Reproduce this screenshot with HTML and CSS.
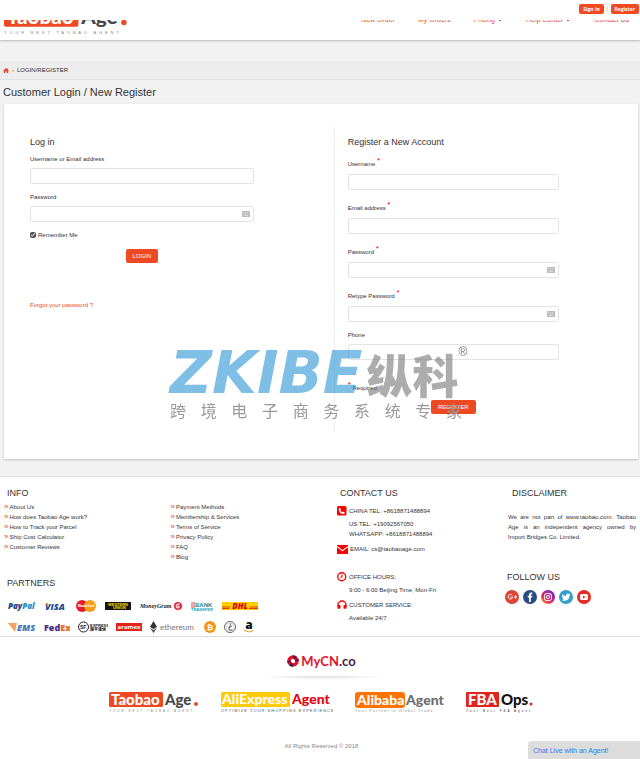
FILE: index.html
```html
<!DOCTYPE html>
<html lang="en">
<head>
  <meta charset="UTF-8" />
  <meta name="viewport" content="width=device-width, initial-scale=1" />
  <title>Customer Login / New Register - Taobao Age</title>
  <link rel="stylesheet" href="styles.css">
</head>
<body>

<!-- Shared drawings -->
<svg class="sprite" aria-hidden="true">
  <symbol id="logo-taobao" viewBox="0 0 90 21">
    <rect x="0" y="0" width="54" height="15" rx="1.5" fill="#ed4a24"/>
    <text x="2" y="13" class="wordmark" fill="#fff">Taobao</text>
    <text x="56" y="13" class="wordmark" fill="#454849">Age</text>
    <circle cx="87" cy="12" r="2" fill="#ed4a24"/>
    <text x="0" y="20" class="tagline tagline-wide" fill="#888">YOUR BEST TAOBAO AGENT</text>
  </symbol>
  <symbol id="icon-keyboard" viewBox="0 0 8 6">
    <rect width="8" height="6" rx="0.5" fill="#bbb"/>
    <path d="M1 1.5h1M3 1.5h1M5 1.5h1M1.5 3h1M3.5 3h1M5.5 3h1M2 4.6h4" stroke="#fff" stroke-width="0.5"/>
  </symbol>
</svg>

<div class="topbar">
  <a class="top-btn" href="#login">Sign in</a>
  <span class="top-sep">|</span>
  <a class="top-btn" href="#register">Register</a>
</div>

<header class="header">
  <a class="header-logo" href="#" aria-label="Taobao Age"><svg width="124" height="29"><use href="#logo-taobao"/></svg></a>
  <nav class="nav">
    <a href="#">New Order</a>
    <a href="#">My Orders</a>
    <a href="#">Pricing <svg width="6" height="4" viewBox="0 0 6 4"><path d="M1 1l2 2 2-2" fill="none" stroke="#ed4a24"/></svg></a>
    <a href="#">Help Center <svg width="6" height="4" viewBox="0 0 6 4"><path d="M1 1l2 2 2-2" fill="none" stroke="#ed4a24"/></svg></a>
    <a href="#">Contact Us</a>
  </nav>
</header>

<div class="breadcrumb">
  <a href="#" aria-label="Home"><svg width="6" height="5" viewBox="0 0 6 5"><path d="M3 0L0 2.7h.8V5h1.6V3.2h1.2V5h1.6V2.7H6L5 1.8V.4h-.8v.7z" fill="#ed4a24"/></svg></a>
  <span class="crumb-sep">›</span>
  <span>LOGIN/REGISTER</span>
</div>

<h1 class="page-title">Customer Login / New Register</h1>

<main class="card">
  <form class="login" id="login">
    <h2>Log in</h2>
    <div class="field">
      <label for="log-user">Username or Email address</label>
      <input type="text" id="log-user">
    </div>
    <div class="field">
      <label for="log-pass">Password</label>
      <div class="input-wrap">
        <input type="password" id="log-pass">
        <svg class="keyboard" width="8" height="6"><use href="#icon-keyboard"/></svg>
      </div>
    </div>
    <div class="remember">
      <input type="checkbox" id="remember" checked>
      <label for="remember">Remember Me</label>
    </div>
    <button class="btn" type="button">LOGIN</button>
    <a class="forgot" href="#">Forgot your password ?</a>
  </form>

  <form class="register" id="register">
    <h2>Register a New Account</h2>
    <div class="field">
      <label class="req" for="reg-user">Username <sup>*</sup></label>
      <input type="text" id="reg-user">
    </div>
    <div class="field">
      <label class="req" for="reg-email">Email address <sup>*</sup></label>
      <input type="email" id="reg-email">
    </div>
    <div class="field">
      <label class="req" for="reg-pass">Password <sup>*</sup></label>
      <div class="input-wrap">
        <input type="password" id="reg-pass">
        <svg class="keyboard" width="8" height="6"><use href="#icon-keyboard"/></svg>
      </div>
    </div>
    <div class="field">
      <label class="req" for="reg-pass2">Retype Password <sup>*</sup></label>
      <div class="input-wrap">
        <input type="password" id="reg-pass2">
        <svg class="keyboard" width="8" height="6"><use href="#icon-keyboard"/></svg>
      </div>
    </div>
    <div class="field">
      <label for="reg-phone">Phone</label>
      <input type="tel" id="reg-phone">
    </div>
    <p class="req required-note"><sup>*</sup> Required</p>
    <button class="btn" type="button">REGISTER</button>
  </form>
</main>

<footer>
  <div class="footer-main">
    <section class="info">
      <h3>INFO</h3>
      <div class="info-lists">
        <ul>
          <li><a href="#">About Us</a></li>
          <li><a href="#">How does Taobao Age work?</a></li>
          <li><a href="#">How to Track your Parcel</a></li>
          <li><a href="#">Ship Cost Calculator</a></li>
          <li><a href="#">Customer Reviews</a></li>
        </ul>
        <ul>
          <li><a href="#">Payment Methods</a></li>
          <li><a href="#">Membership &amp; Services</a></li>
          <li><a href="#">Terms of Service</a></li>
          <li><a href="#">Privacy Policy</a></li>
          <li><a href="#">FAQ</a></li>
          <li><a href="#">Blog</a></li>
        </ul>
      </div>
      <h3 class="partners-title">PARTNERS</h3>
      <div class="partners">
        <svg width="28" height="12" viewBox="0 0 28 12"><text x="0" y="9" font-family="Open Sans" font-size="8" font-weight="800" font-style="italic" fill="#1b3f82">Pay<tspan fill="#2490cf">Pal</tspan></text></svg>
        <svg width="22" height="12" viewBox="0 0 22 12"><text x="0" y="10" font-family="Open Sans" font-size="9" font-weight="800" font-style="italic" fill="#1a4b96">VISA</text><path d="M0 3h3l1 4z" fill="#f0a020"/></svg>
        <svg width="20" height="12" viewBox="0 0 20 12"><circle cx="6" cy="6" r="6" fill="#e41f2d"/><circle cx="14" cy="6" r="6" fill="#f79e1b"/><text x="10" y="7" text-anchor="middle" font-family="Open Sans" font-size="3" font-weight="700" font-style="italic" fill="#fff">MasterCard</text></svg>
        <svg width="26" height="12" viewBox="0 0 26 12"><rect y="2" width="26" height="8" fill="#151515"/><g font-family="Liberation Sans" font-size="4" font-weight="700" fill="#ffdd00"><text x="3" y="6">WESTERN</text><text x="8" y="9">UNION</text></g></svg>
        <svg width="42" height="12" viewBox="0 0 42 12"><text x="0" y="8" font-family="Liberation Serif" font-size="6" font-weight="700" font-style="italic" fill="#222">MoneyGram</text><circle cx="38" cy="6" r="4" fill="#e5233b"/><path d="M40 4h-3l-1 2 1 2h2V6h-2" fill="none" stroke="#fff"/></svg>
        <svg width="22" height="12" viewBox="0 0 22 12"><path d="M0 3h4M0 5h4M0 7h4" stroke="#db4b40"/><text x="4" y="7" font-family="Liberation Sans" font-size="6" font-weight="700" fill="#14899c">BANK</text><text x="0" y="11" font-family="Liberation Sans" font-size="4" font-weight="700" fill="#1ca0b5">TRANSFER</text></svg>
        <svg width="36" height="12" viewBox="0 0 36 12"><rect y="2" width="36" height="8" fill="#ffcc00"/><path d="M0 7h8M0 8.5h7M28 7h8M27 8.5h9" stroke="#d40511" stroke-width="0.7"/><text x="18" y="9" text-anchor="middle" font-family="Open Sans" font-size="8" font-weight="800" font-style="italic" fill="#d40511">DHL</text></svg>
      </div>
      <div class="partners">
        <svg width="28" height="12" viewBox="0 0 28 12"><path d="M0 2h9L7 11z" fill="#f4a261"/><text x="9" y="10" font-family="Open Sans" font-size="9" font-weight="800" font-style="italic" fill="#3a7db5">EMS</text></svg>
        <svg width="26" height="12" viewBox="0 0 26 12"><text x="0" y="10" font-family="Open Sans" font-size="9" font-weight="800" fill="#4d2a8c">Fed<tspan fill="#f4661b">Ex</tspan></text></svg>
        <svg width="30" height="12" viewBox="0 0 30 12"><circle cx="5.5" cy="6" r="5" fill="#fff" stroke="#222"/><text x="2" y="8" font-family="Liberation Sans" font-size="5" font-weight="700" fill="#222">SF</text><text x="12" y="6" font-family="Liberation Sans" font-size="4" font-weight="700" fill="#222">EXPRESS</text><text x="12" y="10" font-family="Noto Sans CJK SC" font-size="4" font-weight="700" fill="#222">顺丰速运</text></svg>
        <svg width="26" height="12" viewBox="0 0 26 12"><rect y="2" width="26" height="8" fill="#e3231e"/><text x="13" y="8" text-anchor="middle" font-family="Open Sans" font-size="6" font-weight="700" fill="#fff">aramex</text></svg>
        <svg width="46" height="12" viewBox="0 0 46 12"><path d="M3.5 0L0 6l3.500 2L7 6z" fill="#333"/><path d="M0 7l3.500 5L7 7 3.500 9z" fill="#555"/><text x="10" y="9" font-family="Lato" font-size="8" fill="#777">ethereum</text></svg>
        <svg width="12" height="12" viewBox="0 0 12 12"><circle cx="6" cy="6" r="6" fill="#f7931a"/><text x="6" y="9" text-anchor="middle" font-family="Liberation Sans" font-size="8" font-weight="700" fill="#fff">₿</text></svg>
        <svg width="12" height="12" viewBox="0 0 12 12"><circle cx="6" cy="6" r="5.500" fill="#fff" stroke="#666"/><circle cx="6" cy="6" r="4" fill="none" stroke="#aaa" stroke-width="0.5"/><path d="M6.500 2.500L5 9h3.500M4 7l4-2" fill="none" stroke="#666"/></svg>
        <svg width="10" height="12" viewBox="0 0 10 12"><text x="5" y="8" text-anchor="middle" font-family="Open Sans" font-size="12" font-weight="800" fill="#111">a</text><path d="M0 9q5 3.500 9 .5" fill="none" stroke="#f79400"/></svg>
      </div>
    </section>

    <section class="contact">
      <h3>CONTACT US</h3>
      <div class="contact-group">
        <p class="contact-head"><svg width="10" height="10" viewBox="0 0 10 10"><rect width="9.500" height="9.500" rx="1.500" fill="#f00"/><path d="M2.800 1.800l1.300 1.600-.7.9q.7 1.300 2 2l.9-.7 1.600 1.200q-.5 1.500-2 1.300Q2.200 7 1.700 3.500q0-1.300 1.100-1.700z" fill="#fff"/></svg>CHINA TEL: +8618871488894</p>
        <p>US TEL: +19092567050</p>
        <p>WHATSAPP: +8618871488894</p>
      </div>
      <div class="contact-group contact-mail">
        <p class="contact-head"><svg width="11" height="9" viewBox="0 0 11 9"><path d="M0 0h11v1L5.500 5 0 1zM0 2.300l5.500 4 5.500-4V9H0z" fill="#f00"/></svg>EMAIL: cs@taobaoage.com</p>
      </div>
      <div class="contact-group">
        <p class="contact-head"><svg width="10" height="10" viewBox="0 0 10 10"><circle cx="4.700" cy="4.700" r="4" fill="none" stroke="#f00" stroke-width="1.400"/><path d="M5 2.500v2.700H3.300" fill="none" stroke="#f00"/></svg>OFFICE HOURS:</p>
        <p>9:00 - 6:00 Beijing Time, Mon-Fri</p>
      </div>
      <div class="contact-group">
        <p class="contact-head"><svg width="10" height="10" viewBox="0 0 10 10"><path d="M1 6.500V5a4 4 0 0 1 8 0v1.500" fill="none" stroke="#f00" stroke-width="1.400"/><rect x="0.500" y="5" width="3" height="3.800" rx="0.800" fill="#f00"/><rect x="6.500" y="5" width="3" height="3.800" rx="0.800" fill="#f00"/></svg>CUSTOMER SERVICE:</p>
        <p>Available 24/7</p>
      </div>
    </section>

    <section class="about">
      <h3>DISCLAIMER</h3>
      <p>We are not part of www.taobao.com. Taobao Age is an independent agency owned by Import&nbsp;Bridges Co. Limited.</p>
      <h3 class="follow-title">FOLLOW US</h3>
      <div class="social">
        <a href="#" aria-label="Google Plus"><svg width="14" height="14" viewBox="0 0 14 14"><circle cx="7" cy="7" r="7" fill="#db4437"/><path d="M7.300 5.300A2.300 2.300 0 1 0 7.700 7.200H5.500M9 7h3M10.500 5.500v3" fill="none" stroke="#fff"/></svg></a>
        <a href="#" aria-label="Facebook"><svg width="14" height="14" viewBox="0 0 14 14"><circle cx="7" cy="7" r="7" fill="#2c4a86"/><path d="M6 12V7.500H4.700V5.800H6V4.600Q6 2.500 8 2.500h1.300v1.700H8.400q-.6 0-.6.600v1h1.500L9 7.500H7.800V12z" fill="#fff"/></svg></a>
        <a href="#" aria-label="Instagram"><svg width="14" height="14" viewBox="0 0 14 14"><defs><linearGradient id="insta" x1="0" y1="1" x2="0.800" y2="0"><stop offset="0" stop-color="#f9a03f"/><stop offset="0.450" stop-color="#e2255f"/><stop offset="1" stop-color="#6a28d0"/></linearGradient></defs><circle cx="7" cy="7" r="7" fill="url(#insta)"/><rect x="3.500" y="3.500" width="7" height="7" rx="2" fill="none" stroke="#fff"/><circle cx="7" cy="7" r="1.600" fill="none" stroke="#fff"/><circle cx="9" cy="5" r="0.500" fill="#fff"/></svg></a>
        <a href="#" aria-label="Twitter"><svg width="14" height="14" viewBox="0 0 14 14"><circle cx="7" cy="7" r="7" fill="#2f9fc9"/><path d="M3 4q1.600 1.900 3.900 1.900Q6.700 3.600 8.700 3.400q.9 0 1.400.6l1.200-.4-.7 1.100.9-.2-1 1Q10.300 10.500 6 10.800q-1.900 0-3.300-.9 1.600 0 2.500-.8-1.300-.2-1.700-1.300h.8Q3 7.200 2.900 5.900l.8.200Q2.500 5.100 3 4z" fill="#fff"/></svg></a>
        <a href="#" aria-label="YouTube"><svg width="14" height="14" viewBox="0 0 14 14"><circle cx="7" cy="7" r="7" fill="#e62a24"/><rect x="3" y="4" width="8" height="6" rx="1.500" fill="#fff"/><path d="M6 5.500v3L8.700 7z" fill="#e62a24"/></svg></a>
      </div>
    </section>
  </div>

  <div class="footer-bottom">
    <a class="mycn" href="#">
      <svg width="12" height="12" viewBox="0 0 12 12"><circle cx="6" cy="6" r="4" fill="none" stroke="#e3122d" stroke-width="3.600"/><path d="M6 2a4 4 0 0 1 4 4M6 10a4 4 0 0 1-4-4" fill="none" stroke="#4d1a4b" stroke-width="3.600" stroke-dasharray="3 1.500"/><path d="M4 2.500q3 0 3.500 2M8 9.500q-3 0-3.500-2" fill="none" stroke="#e3122d"/></svg>
      <span>MyCN<span class="mycn-tld">.co</span></span>
    </a>
    <div class="glow"></div>
    <div class="brands">
      <a href="#" aria-label="Taobao Age"><svg width="90" height="21"><use href="#logo-taobao"/></svg></a>
      <a href="#" aria-label="AliExpress Agent"><svg width="112" height="21" viewBox="0 0 112 21"><rect width="69" height="15" rx="1.500" fill="#ffc90e"/><text x="1" y="12" class="wordmark wordmark-sm" fill="#fff">AliExpress</text><text x="71" y="12" class="wordmark wordmark-sm" fill="#e8000e">Agent</text><text x="0" y="20" class="tagline" fill="#555">OPTIMIZE YOUR SHOPPING EXPERIENCE</text></svg></a>
      <a href="#" aria-label="Alibaba Agent"><svg width="89" height="21" viewBox="0 0 89 21"><rect width="50" height="16" rx="3" fill="#ff7300"/><text x="2" y="13" class="wordmark wordmark-sm" fill="#fff">Alibaba</text><text x="51" y="13" class="wordmark wordmark-sm" fill="#6d6e70">Agent</text><text x="0" y="20" class="tagline" fill="#999">Your Partner in Global Trade</text></svg></a>
      <a href="#" aria-label="FBA Ops"><svg width="68" height="21" viewBox="0 0 68 21"><rect width="33" height="15" rx="1" fill="#e3231e"/><text x="2" y="13" class="wordmark" fill="#fff">FBA</text><text x="35" y="13" class="wordmark" fill="#111">Ops</text><circle cx="65" cy="12" r="1.500" fill="#e3231e"/><text x="0" y="20" class="tagline tagline-wide" fill="#333">Your Best FBA Agent</text></svg></a>
    </div>
    <p class="copyright">All Rights Reserved © 2018</p>
  </div>
</footer>

<div class="watermark" aria-hidden="true">
  <div class="watermark-box">
    <div class="watermark-name"><span class="wm-latin">ZKIBE</span><span class="wm-cjk">纵科</span><span class="wm-reg">®</span></div>
    <div class="watermark-sub">跨 境 电 子 商 务 系 统 专 家</div>
  </div>
</div>

<button class="chat" type="button">Chat Live with an Agent!</button>

</body>
</html>
```
FILE: styles.css
```css
* {
  box-sizing: border-box;
}
body {
  margin: 0;
  background: #f2f2f2;
  color: #333;
  font-family: "Liberation Sans", Arial, sans-serif;
  font-size: 6px;
  line-height: 10px;
}
h1, h2, h3, p, ul {
  margin: 0;
  padding: 0;
  font-weight: normal;
}
a {
  color: #ed4a24;
  text-decoration: none;
}
svg {
  display: block;
}
.sprite {
  position: absolute;
  width: 0;
  height: 0;
}

/* Logos */
.wordmark {
  font-family: Lato, sans-serif;
  font-size: 15px;
  font-weight: 900;
}
.wordmark-sm {
  font-size: 14px;
}
.tagline {
  font-family: "Liberation Sans", Arial, sans-serif;
  font-size: 4px;
  letter-spacing: 1px;
}
.tagline-wide {
  font-size: 3px;
  letter-spacing: 2px;
}

/* Header */
.topbar {
  position: fixed;
  top: 0;
  left: 0;
  right: 0;
  z-index: 2;
  height: 20px;
  padding: 0 1px 2px 0;
  display: flex;
  justify-content: flex-end;
  align-items: center;
  gap: 2px;
  background: #fff;
  font-family: "Open Sans", sans-serif;
  font-size: 5px;
}
.top-btn {
  padding: 0 4px;
  border-radius: 2px;
  background: #f04a22;
  color: #fff;
  font-weight: bold;
}
.top-sep {
  color: #ed4a24;
}
.header {
  height: 40px;
  padding: 0 11px 0 4px;
  display: flex;
  justify-content: space-between;
  align-items: center;
  background: #fff;
  box-shadow: 0 1px 2px rgba(0, 0, 0, 0.25);
}
.nav {
  display: flex;
  gap: 23px;
  font-size: 7px;
}
.nav a {
  display: flex;
  align-items: center;
  gap: 2px;
}

.breadcrumb {
  margin-top: 21px;
  height: 19px;
  padding: 0 3px;
  display: flex;
  align-items: center;
  gap: 3px;
  background: #ededed;
  border-bottom: 1px solid #e2e2e2;
}
.crumb-sep {
  color: #ed4a24;
}
.page-title {
  padding: 4px 3px;
  font-size: 11px;
  line-height: 16px;
}

/* Login and register */
.card {
  margin: 0 2px 17px 4px;
  padding: 23px 0 27px;
  display: grid;
  grid-template-columns: 52% 48%;
  background: #fff;
  box-shadow: 0 1px 2px rgba(0, 0, 0, 0.2);
}
.login, .register {
  padding-top: 9px;
}
.login {
  padding-left: 26px;
  padding-right: 80px;
}
.register {
  padding-left: 13px;
  padding-right: 79px;
  padding-bottom: 18px;
  border-left: 1px solid #eee;
}
.card h2 {
  margin-bottom: 6px;
  font-size: 9px;
  line-height: 12px;
}
.field {
  margin-bottom: 8px;
}
.field label {
  display: block;
  margin-bottom: 4px;
}
.field .req {
  margin-bottom: 0;
}
.req {
  line-height: 20px;
}
.req sup {
  color: #f00;
  font-size: 8px;
  line-height: 0;
}
.field input {
  display: block;
  width: 100%;
  height: 16px;
  padding: 0 14px 0 4px;
  border: 1px solid #e4e4e4;
  border-radius: 2px;
  background: #fff;
  font: inherit;
}
.input-wrap {
  position: relative;
}
.keyboard {
  position: absolute;
  right: 4px;
  top: 5px;
}
.remember {
  display: flex;
  align-items: center;
  gap: 2px;
}
.remember input {
  width: 6px;
  height: 6px;
  margin: 0;
  accent-color: #555;
}
.btn {
  display: block;
  margin: 0 auto;
  height: 14px;
  padding: 0 7px;
  border: 0;
  border-radius: 2px;
  background: #ed4a24;
  color: #fff;
  font: inherit;
}
.login .btn {
  margin-top: 9px;
}
.forgot {
  display: block;
  margin-top: 37px;
}
.required-note {
  margin-top: 18px;
  margin-bottom: 2px;
}

/* Footer */
.footer-main {
  padding: 8px 4px 3px;
  display: grid;
  grid-template-columns: 333fr 168fr 131fr;
  background: #fff;
  border-top: 1px solid #ddd;
  border-bottom: 1px solid #ddd;
}
h3 {
  padding-left: 3px;
  font-size: 9px;
  line-height: 16px;
}
.info-lists {
  margin-top: 1px;
  display: grid;
  grid-template-columns: 1fr 1fr;
}
.info-lists ul {
  list-style: none;
}
.info-lists a {
  color: #333;
}
.info-lists li::before {
  content: "»";
  margin-right: 1px;
  color: #ed4a24;
  font-size: 8px;
  line-height: 0;
}
.partners-title {
  margin-top: 13px;
}
.partners {
  margin-top: 9px;
  padding-left: 4px;
  display: flex;
  gap: 9px;
}
.partners + .partners {
  gap: 8px;
}

.contact-group {
  margin-top: 4px;
}
.contact-head {
  margin-bottom: 2px;
  height: 12px;
  display: flex;
  align-items: center;
  gap: 2px;
}
.contact-group p:not(.contact-head) {
  padding-left: 12px;
}
.contact-mail {
  margin-bottom: 16px;
}
.about h3 {
  padding-left: 7px;
}
.about p {
  margin-top: 11px;
  margin-bottom: 27px;
  padding-left: 3px;
  text-align: justify;
}
.about .follow-title {
  padding-left: 2px;
}
.social {
  margin-top: 5px;
  display: flex;
  gap: 4px;
}

.footer-bottom {
  padding: 17px 0 8px 3px;
  background: #fff;
}
.mycn {
  display: flex;
  justify-content: center;
  align-items: center;
  gap: 2px;
  color: #e3122d;
  font-family: Lato, sans-serif;
  font-size: 13px;
  line-height: 14px;
  font-weight: bold;
}
.mycn-tld {
  color: #4d1a4b;
}
.glow {
  width: 130px;
  height: 4px;
  margin: 8px auto 12px;
  background: radial-gradient(ellipse at top, #ddd, transparent 70%);
}
.brands {
  display: flex;
  justify-content: center;
  gap: 22px;
}
.copyright {
  margin-top: 28px;
  color: #888;
  text-align: center;
}

/* Floating items */
.watermark {
  position: fixed;
  inset: 0;
  padding-top: 6px;
  display: grid;
  place-items: center;
  pointer-events: none;
}
.watermark-box {
  width: 300px;
}
.watermark-name {
  display: flex;
  align-items: center;
  line-height: 54px;
}
.wm-latin {
  color: #2a94d6;
  opacity: 0.6;
  font-family: "DejaVu Sans", sans-serif;
  font-size: 58px;
  font-weight: bold;
  font-style: italic;
}
.wm-cjk {
  margin-left: 4px;
  color: #777;
  opacity: 0.6;
  font-family: "Noto Sans CJK SC", sans-serif;
  font-size: 46px;
  font-weight: 900;
}
.wm-reg {
  align-self: flex-start;
  color: #777;
  font-size: 12px;
  line-height: 12px;
}
.watermark-sub {
  width: 292px;
  color: #999;
  font-family: "Noto Sans CJK SC", sans-serif;
  font-size: 16px;
  line-height: 20px;
  text-align-last: justify;
}
.chat {
  position: fixed;
  right: 0;
  bottom: 0;
  width: 112px;
  height: 18px;
  padding: 0 5px;
  border: 0;
  border-radius: 4px 0 0 0;
  background: #dcdcdc;
  color: #2a7fee;
  font-family: inherit;
  font-size: 7px;
  text-align: left;
}
```
